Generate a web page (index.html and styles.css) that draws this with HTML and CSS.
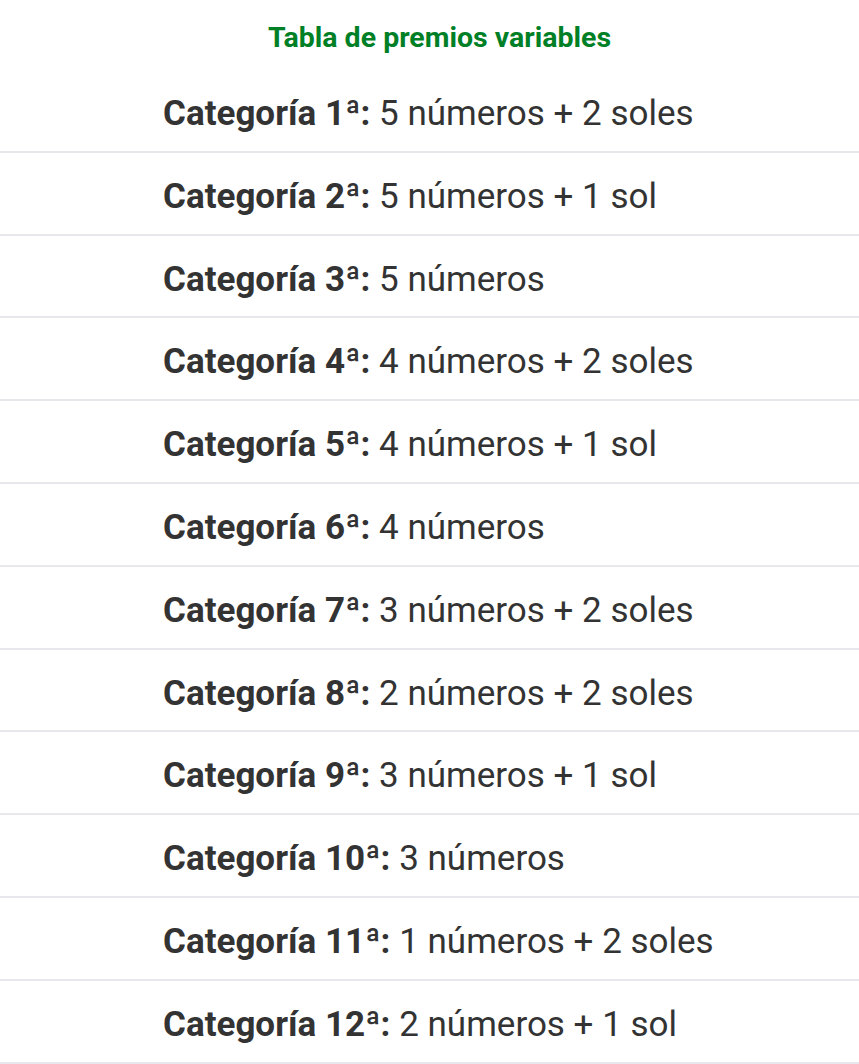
FILE: index.html
```html
<!DOCTYPE html>
<html lang="es">
<head>
<meta charset="utf-8">
<title>Tabla de premios variables</title>
<link rel="stylesheet" href="styles.css">
</head>
<body>
<div class="wrap">
  <h2 class="title">Tabla de premios variables</h2>
  <ul class="list">
    <li class="row"><strong>Categoría 1ª:</strong> 5 números + 2 soles</li>
    <li class="row"><strong>Categoría 2ª:</strong> 5 números + 1 sol</li>
    <li class="row"><strong>Categoría 3ª:</strong> 5 números</li>
    <li class="row"><strong>Categoría 4ª:</strong> 4 números + 2 soles</li>
    <li class="row"><strong>Categoría 5ª:</strong> 4 números + 1 sol</li>
    <li class="row"><strong>Categoría 6ª:</strong> 4 números</li>
    <li class="row"><strong>Categoría 7ª:</strong> 3 números + 2 soles</li>
    <li class="row"><strong>Categoría 8ª:</strong> 2 números + 2 soles</li>
    <li class="row"><strong>Categoría 9ª:</strong> 3 números + 1 sol</li>
    <li class="row"><strong>Categoría 10ª:</strong> 3 números</li>
    <li class="row"><strong>Categoría 11ª:</strong> 1 números + 2 soles</li>
    <li class="row"><strong>Categoría 12ª:</strong> 2 números + 1 sol</li>
  </ul>
</div>
</body>
</html>
```

FILE: styles.css
```css
html, body {
  margin: 0;
  padding: 0;
  background: #ffffff;
}
body {
  font-family: Roboto, "Liberation Sans", sans-serif;
  color: #333333;
}
.wrap {
  width: 859px;
}
.title {
  margin: 0;
  padding: 19px 0 14px 20px;
  text-align: center;
  font-size: 28.5px;
  line-height: 37px;
  font-weight: 700;
  color: #008026;
}
.list {
  list-style: none;
  margin: 0;
  padding: 0;
}
.row {
  padding: 20px 0 13.8px 163px;
  font-size: 35px;
  line-height: 47px;
  border-bottom: 2px solid #e8e8ec;
}
.row strong {
  font-weight: 700;
}
```
